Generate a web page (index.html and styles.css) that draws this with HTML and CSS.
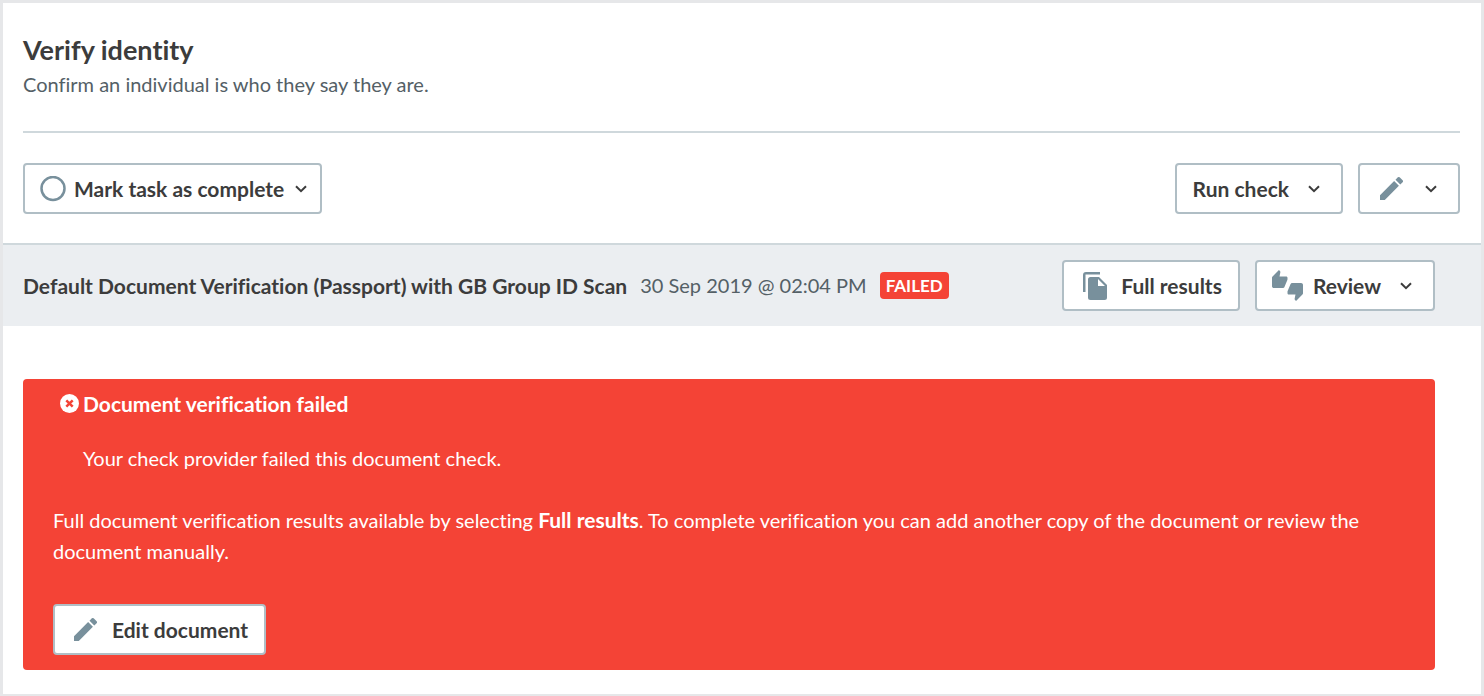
FILE: index.html
```
<!DOCTYPE html>
<html lang="en">
<head>
  <meta charset="UTF-8">
  <meta name="viewport" content="width=device-width, initial-scale=1.0">
  <title>Verify identity</title>
  <link rel="stylesheet" href="styles.css">
</head>
<body>

  <main class="task">
    <header class="task-header">
      <h1>Verify identity</h1>
      <p>Confirm an individual is who they say they are.</p>
    </header>

    <div class="toolbar">
      <button type="button" class="btn btn-complete" aria-haspopup="true">
        <svg class="icon-circle" viewBox="0 0 26 26" aria-hidden="true"><circle cx="13" cy="12.5" r="11.5"/></svg>
        Mark task as complete
        <svg class="chevron" viewBox="0 0 12 8" aria-hidden="true"><path d="M1 1.2l5 5 5-5"/></svg>
      </button>
      <div class="btn-group">
        <button type="button" class="btn btn-run" aria-haspopup="true">
          Run check
          <svg class="chevron" viewBox="0 0 12 8" aria-hidden="true"><path d="M1 1.2l5 5 5-5"/></svg>
        </button>
        <button type="button" class="btn btn-edit-menu" aria-label="Edit" aria-haspopup="true">
          <svg class="icon" viewBox="3 3 18 18" aria-hidden="true"><path d="M3 17.25V21h3.75L17.81 9.94l-3.75-3.75L3 17.25zM20.71 7.04a1 1 0 0 0 0-1.41l-2.34-2.34a1 1 0 0 0-1.41 0l-1.83 1.83 3.75 3.75 1.83-1.83z"/></svg>
          <svg class="chevron" viewBox="0 0 12 8" aria-hidden="true"><path d="M1 1.2l5 5 5-5"/></svg>
        </button>
      </div>
    </div>

    <section class="check">
      <div class="check-bar">
        <div class="check-info">
          <h2>Default Document Verification (Passport) with GB Group ID Scan</h2>
          <time datetime="2019-09-30T14:04">30 Sep 2019 @ 02:04 PM</time>
          <span class="badge">FAILED</span>
        </div>
        <div class="btn-group">
          <button type="button" class="btn btn-results">
            <svg class="icon-copy" viewBox="0 0 26 30" aria-hidden="true">
              <path d="M18 1H4a3 3 0 0 0-3 3v17h2.500V3.500H18z"/>
              <path fill-rule="evenodd" d="M8.500 6H17l8 8v12.500a2.500 2.500 0 0 1-2.500 2.500h-14A2.500 2.500 0 0 1 6 26.500v-18A2.500 2.500 0 0 1 8.500 6zM16 8v7h7z"/>
            </svg>
            Full results
          </button>
          <button type="button" class="btn btn-review" aria-haspopup="true">
            <svg class="icon-thumbs" viewBox="0 0 24 24" aria-hidden="true">
              <path d="M12 6c0-.55-.45-1-1-1H5.820l.66-3.180.02-.23c0-.31-.13-.59-.33-.8L5.380 0 .44 4.940C.17 5.210 0 5.590 0 6v6.500c0 .83.67 1.500 1.500 1.500h6.750c.62 0 1.150-.38 1.380-.91l2.260-5.290c.07-.17.11-.36.11-.55V6zM22.500 10h-6.750c-.62 0-1.150.38-1.380.91l-2.260 5.290c-.07.17-.11.36-.11.55V18c0 .55.45 1 1 1h5.180l-.66 3.180-.02.24c0 .31.13.59.33.8l.79.780 4.940-4.940c.27-.27.44-.65.44-1.060v-6.500c0-.83-.67-1.500-1.500-1.500z"/>
            </svg>
            Review
            <svg class="chevron" viewBox="0 0 12 8" aria-hidden="true"><path d="M1 1.2l5 5 5-5"/></svg>
          </button>
        </div>
      </div>

      <div class="alert" role="alert">
        <h3>
          <svg class="icon-failed" viewBox="0 0 20 20" aria-hidden="true"><circle cx="10.500" cy="9.500" r="9.500"/><path d="M7.300 6.300l6.400 6.400M13.700 6.300l-6.400 6.400"/></svg>
          Document verification failed
        </h3>
        <p class="alert-reason">Your check provider failed this document check.</p>
        <p>Full document verification results available by selecting <strong>Full results</strong>. To complete verification you can add another copy of the document or review the document manually.</p>
        <button type="button" class="btn btn-edit">
          <svg class="icon" viewBox="3 3 18 18" aria-hidden="true"><path d="M3 17.25V21h3.75L17.81 9.94l-3.75-3.75L3 17.25zM20.71 7.04a1 1 0 0 0 0-1.41l-2.34-2.34a1 1 0 0 0-1.41 0l-1.83 1.83 3.75 3.75 1.83-1.83z"/></svg>
          Edit document
        </button>
      </div>
    </section>
  </main>

</body>
</html>
```
FILE: styles.css
```
:root {
  --text: #3c3c3c;
  --text-soft: #546066;
  --icon: #78909c;
  --border: #b0bec5;
  --rule: #cfd8dc;
  --bar: #ebeef1;
  --danger: #f44336;
}

* {
  box-sizing: border-box;
}

body {
  margin: 0;
  background: #fff;
  color: var(--text);
  font-family: Lato, "Open Sans", sans-serif;
  font-size: 20px;
  line-height: 31px;
  font-variant-ligatures: none;
}

h1,
h2,
h3,
p {
  margin: 0;
}

.task {
  min-height: 100vh;
  border: 3px solid #e6e7e9;
  padding-bottom: 24px;
}

/* Header */
.task-header {
  margin: 0 21px 0 20px;
  padding: 29px 0 31px;
  border-bottom: 2px solid var(--rule);
}

.task-header h1 {
  font-size: 27px;
  line-height: 36px;
}

.task-header p {
  line-height: 32px;
  color: var(--text-soft);
}

/* Buttons */
.btn {
  display: inline-flex;
  align-items: center;
  height: 51px;
  padding: 0 16px;
  border: 2px solid var(--border);
  border-radius: 4px;
  background: #fff;
  color: var(--text);
  font: inherit;
  font-size: 21px;
  font-weight: 700;
  white-space: nowrap;
  cursor: pointer;
}

.btn:hover {
  border-color: var(--icon);
}

.btn-group {
  display: flex;
  gap: 15px;
}

.btn svg {
  flex-shrink: 0;
  fill: var(--icon);
}

.btn .chevron {
  width: 12px;
  height: 8px;
  fill: none;
  stroke: var(--text);
  stroke-width: 2;
}

.btn .icon-circle {
  width: 26px;
  height: 26px;
  fill: none;
  stroke: var(--icon);
  stroke-width: 2.5;
}

.icon {
  width: 23px;
  height: 23px;
}

.icon-copy {
  width: 26px;
  height: 30px;
}

.icon-thumbs {
  width: 31px;
  height: 31px;
}

.btn-complete {
  gap: 8px;
  padding: 0 13px 0 15px;
}

.btn-complete .chevron {
  margin-left: 3px;
}

.btn-run {
  gap: 19px;
  padding-right: 21px;
}

.btn-edit-menu {
  gap: 22px;
  padding: 0 21px 0 20px;
}

.btn-results {
  gap: 13px;
  padding-left: 18px;
}

.btn-review {
  gap: 10px;
  padding: 0 21px 0 15px;
}

.btn-review .chevron {
  margin-left: 9px;
}

.btn-edit {
  gap: 15px;
  padding-left: 19px;
}

/* Toolbar */
.toolbar {
  display: flex;
  justify-content: space-between;
  padding: 30px 21px 29px 20px;
}

/* Check result */
.check-bar {
  display: flex;
  align-items: center;
  justify-content: space-between;
  padding: 15px 46px 15px 20px;
  border-top: 2px solid var(--rule);
  background: var(--bar);
}

.check-info {
  display: flex;
  align-items: center;
  gap: 13px;
}

.check-info h2 {
  font-size: 21px;
  line-height: 31px;
}

.check-info time {
  color: var(--text-soft);
}

.badge {
  padding: 0 6px;
  border-radius: 4px;
  background: var(--danger);
  color: #fff;
  font-size: 17px;
  font-weight: 700;
  line-height: 27px;
}

/* Failure message */
.alert {
  margin: 53px 46px 0 20px;
  padding: 9px 30px 15px;
  border-radius: 4px;
  background: var(--danger);
  color: #fff;
}

.alert h3 {
  display: flex;
  align-items: center;
  gap: 4px;
  padding-left: 6px;
  font-size: 21px;
  line-height: 31px;
}

.icon-failed {
  width: 20px;
  height: 20px;
  fill: #fff;
  stroke: var(--danger);
  stroke-width: 2.5;
}

.icon-failed circle {
  stroke: none;
}

.alert p {
  margin-bottom: 37px;
}

.alert strong {
  font-size: 21px;
}

.alert .alert-reason {
  margin: 24px 0 30px;
  padding-left: 30px;
}
```
